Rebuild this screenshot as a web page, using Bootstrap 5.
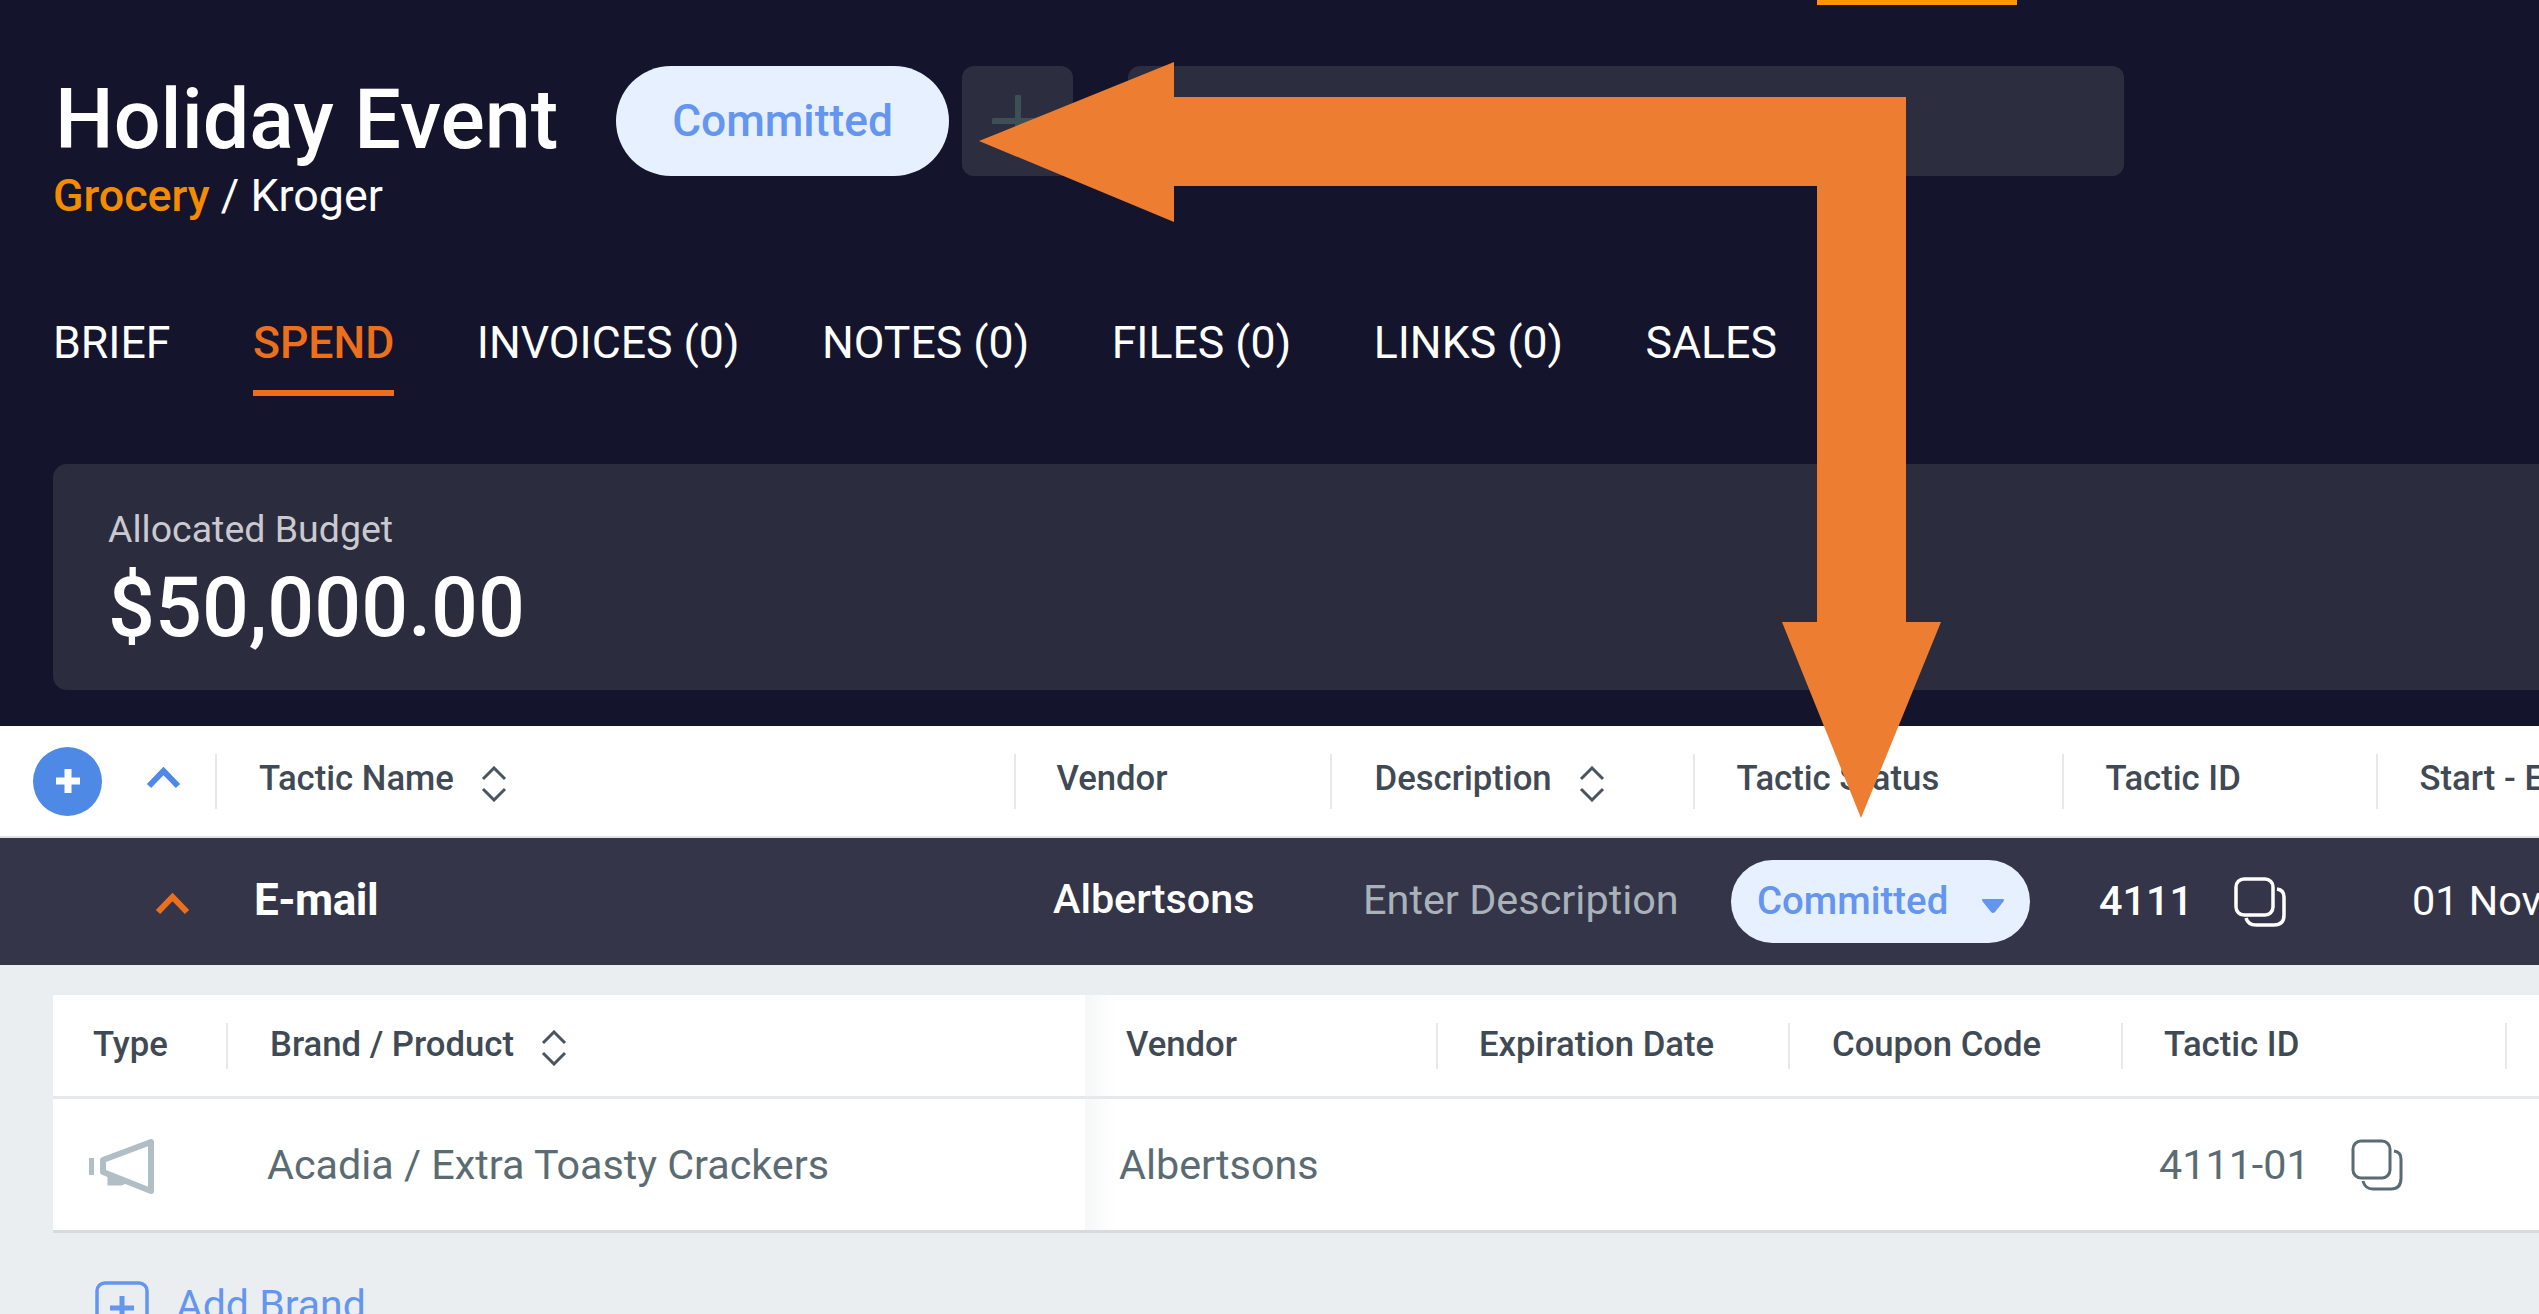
<!doctype html>
<html lang="en">
<head>
<meta charset="utf-8">
<title>Holiday Event</title>
<link href="https://cdn.jsdelivr.net/npm/bootstrap@5.3.0/dist/css/bootstrap.min.css" rel="stylesheet">
<style>
html,body{height:100%}
body{background:#eaeef1;font-family:Roboto,"Liberation Sans",sans-serif;overflow:hidden;position:relative;width:2539px;height:1314px}
.hero{background:#14152d;height:726px;color:#fff}
.top-mark{width:200px;height:5px;background:#ff9500;margin-left:1817px}
.head-row{height:110px;margin-top:61px;padding-left:53px}
.title-box{width:563px;flex:none}
.title-main{font-size:82.700px;font-weight:500;line-height:88px;margin:10px 0 0 2px;white-space:nowrap}
.crumb{font-size:44.800px;line-height:48px;margin-top:8px;white-space:nowrap}
.crumb b{font-weight:500;color:#f68b00}
.status-big{width:333px;height:110px;background:#e7f0ff;color:#6496ef;font-size:44.300px;font-weight:500;flex:none}
.plus-box{width:111px;height:110px;background:#2d2d40;border-radius:12px;margin-left:13px;flex:none}
.wide-box{width:996px;height:110px;background:#2d2d40;border-radius:12px;margin-left:55px;flex:none}
.tab-row{margin-top:138px;padding-left:53px;gap:82.500px;height:82px}
.tab-item{font-size:44.600px;line-height:52px;padding-top:3px;color:#fff;text-decoration:none;height:82px;white-space:nowrap}
.tab-on{color:#ec6f1c;font-weight:500;border-bottom:6px solid #ec6f1c}
.budget{margin:68px 0 0 53px;height:226px;background:#2c2c3f;border-radius:14px 0 0 14px;padding:43px 0 0 55px}
.budget-label{font-size:37.500px;line-height:44px;color:#c9c9cf}
.budget-sum{font-size:82.600px;font-weight:500;line-height:88px;margin-top:13px}
.cell{flex:none;white-space:nowrap}
.sep{border-left:2px solid #e6e8ec;height:55px}
.ico{flex:none}
.sort-ico{flex:none}
.sort-gap{gap:26px}
.th-row{background:#fff;height:112px;color:#3f4a55;font-size:34.700px;font-weight:500;border-bottom:2px solid #dfe3e8}
.th-row .sep{padding-bottom:6px}
.th-row .sort-ico{margin-top:12px}
.plus-round{width:69px;height:69px;border-radius:50%;background:#4f89e6;margin-left:33px;flex:none}
.lead-chev{margin:-7px 34px 0 auto;flex:none}
.w-lead{width:215px}
.w-name{width:798.500px;padding-left:42px}
.w-vendor{width:316px;padding-left:41px}
.w-desc{width:363px;padding-left:43px}
.w-status{width:369px;padding-left:42px}
.w-id{width:314px;padding-left:42px}
.w-start{width:163px;padding-left:42px}
.dark-row{background:#35354a;height:127px;color:#fff;font-size:41.400px}
.d-lead{width:254px;padding-left:155px;padding-bottom:2px}
.d-name{width:799px;font-size:44px;font-weight:700;letter-spacing:-.5px;padding-bottom:3px}
.d-vendor{width:310px;font-size:41.300px;font-weight:500;padding-bottom:3px}
.d-desc{width:368px;color:#a9b2b8;padding-bottom:3px}
.d-pill{width:299px;height:83px;background:#e7f0ff;color:#6496ef;font-weight:500;padding:0 25px 2px 26px;font-size:38.400px}
.d-caret{flex:none;margin-top:10px}
.d-id{margin-left:69px;width:135px;font-weight:500}
.d-date{margin-left:126px}
.sub-wrap{padding:30px 0 0 53px}
.sub-table{background:linear-gradient(90deg,#fff 1032px,#f6f7f8 1032px,#fff 1062px)}
.sub-head{height:104px;color:#3f4a55;font-size:34.700px;font-weight:500;border-bottom:3px solid #e6e8ec}
.sub-head .sep{height:46px;padding-bottom:2px}
.sub-head .sort-ico{margin-top:6px}
.sub-row{height:134px;color:#5b6b73;font-size:41.300px;border-bottom:3px solid #d5dbdf}
.s-type{width:173px;padding-left:40px;padding-bottom:2px}
.s-brand{width:900px;padding-left:42px}
.s-vendor{width:310px;padding-bottom:2px}
.s-exp{width:352px;padding-left:41px}
.s-coupon{width:333px;padding-left:42px}
.s-id{width:384px;padding-left:41px}
.r-type{width:214px;padding-left:36px}
.r-brand{width:852px;padding-top:2px}
.r-vendor{width:1040px;padding-top:2px}
.r-id{width:192px;padding-top:2px}
.add-row{margin:48px 0 0 42px;color:#6496ef;font-size:41px;line-height:48px;gap:27px}
.arrow{position:absolute;left:0;top:0;pointer-events:none}
</style>
</head>
<body>
<div class="hero">
  <div class="top-mark"></div>
  <div class="head-row d-flex align-items-start">
    <div class="title-box">
      <div class="title-main">Holiday Event</div>
      <div class="crumb"><b>Grocery</b> / Kroger</div>
    </div>
    <div class="status-big rounded-pill d-flex align-items-center justify-content-center">Committed</div>
    <div class="plus-box d-flex align-items-center justify-content-center">
      <svg width="52" height="52" viewBox="0 0 52 52"><path d="M26 2V50M2 26H50" stroke="#3d4f57" stroke-width="6" stroke-linecap="round"/></svg>
    </div>
    <div class="wide-box"></div>
  </div>
  <nav class="tab-row d-flex">
    <a class="tab-item" href="#">BRIEF</a>
    <a class="tab-item tab-on" href="#">SPEND</a>
    <a class="tab-item" href="#">INVOICES (0)</a>
    <a class="tab-item" href="#">NOTES (0)</a>
    <a class="tab-item" href="#">FILES (0)</a>
    <a class="tab-item" href="#">LINKS (0)</a>
    <a class="tab-item" href="#">SALES</a>
  </nav>
  <div class="budget">
    <div class="budget-label">Allocated Budget</div>
    <div class="budget-sum">$50,000.00</div>
  </div>
</div>

<div class="th-row d-flex align-items-center">
  <div class="cell w-lead d-flex align-items-center">
    <div class="plus-round d-flex align-items-center justify-content-center">
      <svg width="30" height="30" viewBox="0 0 30 30"><path d="M15 3V27M3 15H27" stroke="#fff" stroke-width="7"/></svg>
    </div>
    <svg class="lead-chev" width="35" height="22" viewBox="0 0 35 22"><path d="M3 19L17.500 4L32 19" fill="none" stroke="#4f89e6" stroke-width="6"/></svg>
  </div>
  <div class="cell sep w-name d-flex align-items-center sort-gap">Tactic Name
    <svg class="sort-ico" width="28" height="36" viewBox="0 0 28 36"><path d="M3 13L14 2L25 13M3 23L14 34L25 23" fill="none" stroke="#4a5560" stroke-width="3"/></svg>
  </div>
  <div class="cell sep w-vendor d-flex align-items-center">Vendor</div>
  <div class="cell sep w-desc d-flex align-items-center sort-gap">Description
    <svg class="sort-ico" width="28" height="36" viewBox="0 0 28 36"><path d="M3 13L14 2L25 13M3 23L14 34L25 23" fill="none" stroke="#4a5560" stroke-width="3"/></svg>
  </div>
  <div class="cell sep w-status d-flex align-items-center">Tactic Status</div>
  <div class="cell sep w-id d-flex align-items-center">Tactic ID</div>
  <div class="cell sep w-start d-flex align-items-center">Start - End Date</div>
</div>

<div class="dark-row d-flex align-items-center">
  <div class="cell d-lead">
    <svg width="35" height="22" viewBox="0 0 35 22"><path d="M3 19L17.500 4L32 19" fill="none" stroke="#ec6f1c" stroke-width="6"/></svg>
  </div>
  <div class="cell d-name">E-mail</div>
  <div class="cell d-vendor">Albertsons</div>
  <div class="cell d-desc">Enter Description</div>
  <div class="cell d-pill rounded-pill d-flex align-items-center justify-content-between">Committed
    <svg class="d-caret" width="24" height="16" viewBox="0 0 24 16"><path d="M2 1H22Q24 1 22 4L14 14Q12 16 10 14L2 4Q0 1 2 1Z" fill="#6496ef"/></svg>
  </div>
  <div class="cell d-id">4111</div>
  <svg class="ico" width="52" height="50" viewBox="0 0 52 50" fill="none" stroke="#fff" stroke-width="3.500"><rect x="2" y="2" width="37" height="36" rx="8"/><path d="M43 12Q50 13 50 20V38Q50 48 40 48H22Q14 48 12 41"/></svg>
  <div class="cell d-date">01 Nov 2023</div>
</div>

<div class="sub-wrap">
  <div class="sub-table">
    <div class="sub-head d-flex align-items-center">
      <div class="cell s-type">Type</div>
      <div class="cell sep s-brand d-flex align-items-center sort-gap">Brand / Product
        <svg class="sort-ico" width="28" height="36" viewBox="0 0 28 36"><path d="M3 13L14 2L25 13M3 23L14 34L25 23" fill="none" stroke="#4a5560" stroke-width="3"/></svg>
      </div>
      <div class="cell s-vendor">Vendor</div>
      <div class="cell sep s-exp d-flex align-items-center">Expiration Date</div>
      <div class="cell sep s-coupon d-flex align-items-center">Coupon Code</div>
      <div class="cell sep s-id d-flex align-items-center">Tactic ID</div>
      <div class="cell sep"></div>
    </div>
    <div class="sub-row d-flex align-items-center">
      <div class="cell r-type">
        <svg width="66" height="56" viewBox="0 0 66 56" fill="none" stroke="#b2bec5" stroke-width="6"><path d="M2 19V36"/><path d="M62 3V52L14 33V21Z" stroke-linejoin="round"/><path d="M22 37V43H32L36 41" stroke-width="7"/></svg>
      </div>
      <div class="cell r-brand">Acadia / Extra Toasty Crackers</div>
      <div class="cell r-vendor">Albertsons</div>
      <div class="cell r-id">4111-01</div>
      <svg class="ico" width="52" height="52" viewBox="0 0 52 52" fill="none" stroke="#5b6b73" stroke-width="3"><rect x="2" y="2" width="37" height="37" rx="8"/><path d="M43 12Q50 13 50 20V39Q50 50 40 50H22Q14 50 12 42"/></svg>
    </div>
  </div>
  <div class="add-row d-flex align-items-start">
    <svg class="ico" width="54" height="54" viewBox="0 0 54 54" fill="none" stroke="#6496ef"><rect x="2" y="2" width="50" height="50" rx="8" stroke-width="3.500"/><path d="M27 15V39M15 27H39" stroke-width="5"/></svg>
    <span>Add Brand</span>
  </div>
</div>

<svg class="arrow" width="2539" height="1314" viewBox="0 0 2539 1314"><polygon fill="#ed7d31" points="979,141 1174,62 1174,97 1906,97 1906,622 1941,622 1861,818 1782,622 1817,622 1817,186 1174,186 1174,222"/></svg>
</body>
</html>
